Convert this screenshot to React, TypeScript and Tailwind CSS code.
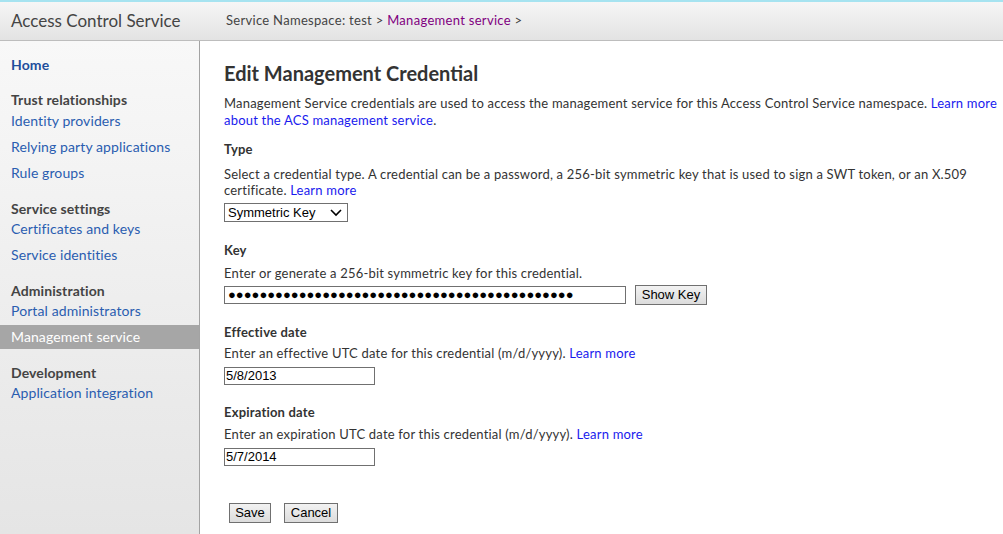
import React, { useState } from "react";

const navGroups = [
  {
    title: "Trust relationships",
    items: ["Identity providers", "Relying party applications", "Rule groups"],
  },
  {
    title: "Service settings",
    items: ["Certificates and keys", "Service identities"],
  },
  {
    title: "Administration",
    items: ["Portal administrators", "Management service"],
  },
  {
    title: "Development",
    items: ["Application integration"],
  },
];

const Sidebar = () => {
  return (
    <div className="w-[200px] shrink-0 border-r border-[#a3a3a3] bg-gradient-to-b from-[#f8f8f8] to-[#e5e5e5] pt-[14px] text-[14px] tracking-[0.1px]">
      <div className="px-[11px] leading-5 font-bold text-[#1e4f9c]">Home</div>
      {navGroups.map((group, i) => (
        <div key={group.title} className={i === 0 ? "mt-[15px]" : "mt-[14px]"}>
          <div className="px-[11px] leading-5 font-bold text-[#444]">
            {group.title}
          </div>
          <div
            className={`${i === 0 ? "-mt-[1px]" : "-mt-[2px]"} flex flex-col gap-[2px]`}
          >
            {group.items.map((item) => {
              const active = item === "Management service";
              return (
                <div
                  key={item}
                  className={
                    active
                      ? "px-[11px] leading-6 bg-[#a6a6a6] text-white"
                      : "px-[11px] leading-6 text-[#2a5db0]"
                  }
                >
                  {item}
                </div>
              );
            })}
          </div>
        </div>
      ))}
    </div>
  );
};

const Field = ({
  label,
  children,
}: {
  label: string;
  children: React.ReactNode;
}) => (
  <div>
    <div className="font-bold leading-[17px] text-[#333]">{label}</div>
    {children}
  </div>
);

const link = "text-[#1a1aee]";
const control =
  "border border-[#707070] bg-white px-[1px] font-['Liberation_Sans',Arial,sans-serif] text-[13px] tracking-normal text-black outline-none";
const button =
  "border border-[#707070] bg-gradient-to-b from-[#f2f2f2] to-[#dcdcdc] font-['Liberation_Sans',Arial,sans-serif] text-[13px] leading-none tracking-normal text-black";

export default function App() {
  const [type, setType] = useState("Symmetric Key");
  const [effective, setEffective] = useState("5/8/2013");
  const [expiration, setExpiration] = useState("5/7/2014");

  return (
    <div className="flex min-h-screen flex-col font-['Lato','Noto_Sans',sans-serif] text-[13px] text-[#333]">
      <div className="h-[2px] bg-[#a6e3f0]" />
      <div className="flex h-[39px] items-center border-b border-[#bdbdbd] bg-gradient-to-b from-[#f6f6f6] to-[#e3e3e3]">
        <div className="w-[226px] pl-[11px] text-[17px] text-[#444]">
          Access Control Service
        </div>
        <div className="text-[13px] tracking-[0.3px] text-[#444]">
          Service Namespace: test &gt;{" "}
          <span className="text-[#800080]">Management service</span> &gt;
        </div>
      </div>

      <div className="flex flex-1">
        <Sidebar />

        <div className="flex-1 bg-white pl-[24px] pr-[4px] pt-[18px] tracking-[0.2px]">
          <h1 className="text-[20px] leading-7 font-bold tracking-normal text-[#333]">
            Edit Management Credential
          </h1>
          <p className="mt-[8px] leading-[17px]">
            Management Service credentials are used to access the management
            service for this Access Control Service namespace.{" "}
            <span className={link}>
              Learn more about the ACS management service
            </span>
            .
          </p>

          <div className="mt-[12px]">
            <Field label="Type">
              <p className="mt-[8px] leading-4">
                Select a credential type. A credential can be a password, a
                256-bit symmetric key that is used to sign a SWT token, or an
                X.509 certificate. <span className={link}>Learn more</span>
              </p>
              <select
                value={type}
                onChange={(e) => setType(e.target.value)}
                className={`${control} mt-[5px] h-[19px] w-[124px] appearance-none pl-[3px] leading-[17px]`}
                style={{
                  backgroundImage:
                    "url(\"data:image/svg+xml;utf8,<svg xmlns='http://www.w3.org/2000/svg' width='12' height='8' viewBox='0 0 12 8'><path d='M1 1l5 5 5-5' fill='none' stroke='black' stroke-width='1.6'/></svg>\")",
                  backgroundRepeat: "no-repeat",
                  backgroundPosition: "right 5px center",
                }}
              >
                <option>Password</option>
                <option>Symmetric Key</option>
                <option>X.509 Certificate</option>
              </select>
            </Field>
          </div>

          <div className="mt-[19px]">
            <Field label="Key">
              <p className="mt-[6px] leading-4">
                Enter or generate a 256-bit symmetric key for this credential.
              </p>
              <div className="mt-[4px] flex items-center gap-[9px]">
                <div
                  className={`${control} flex h-[18px] w-[402px] items-center overflow-hidden pl-[3px] text-[11px] tracking-[0.2px]`}
                >
                  {"●".repeat(44)}
                </div>
                <button className={`${button} h-[20px] w-[72px]`}>
                  Show Key
                </button>
              </div>
            </Field>
          </div>

          <div className="mt-[19px]">
            <Field label="Effective date">
              <p className="mt-[4px] leading-4">
                Enter an effective UTC date for this credential (m/d/yyyy).{" "}
                <span className={link}>Learn more</span>
              </p>
              <input
                value={effective}
                onChange={(e) => setEffective(e.target.value)}
                className={`${control} mt-[6px] block h-[18px] w-[151px] leading-[16px]`}
              />
            </Field>
          </div>

          <div className="mt-[19px]">
            <Field label="Expiration date">
              <p className="mt-[5px] leading-4">
                Enter an expiration UTC date for this credential (m/d/yyyy).{" "}
                <span className={link}>Learn more</span>
              </p>
              <input
                value={expiration}
                onChange={(e) => setExpiration(e.target.value)}
                className={`${control} mt-[6px] block h-[18px] w-[151px] leading-[16px]`}
              />
            </Field>
          </div>

          <div className="mt-[37px] flex gap-[13px] pl-[5px]">
            <button className={`${button} h-[20px] w-[42px]`}>Save</button>
            <button className={`${button} h-[20px] w-[54px]`}>Cancel</button>
          </div>
        </div>
      </div>
    </div>
  );
}
